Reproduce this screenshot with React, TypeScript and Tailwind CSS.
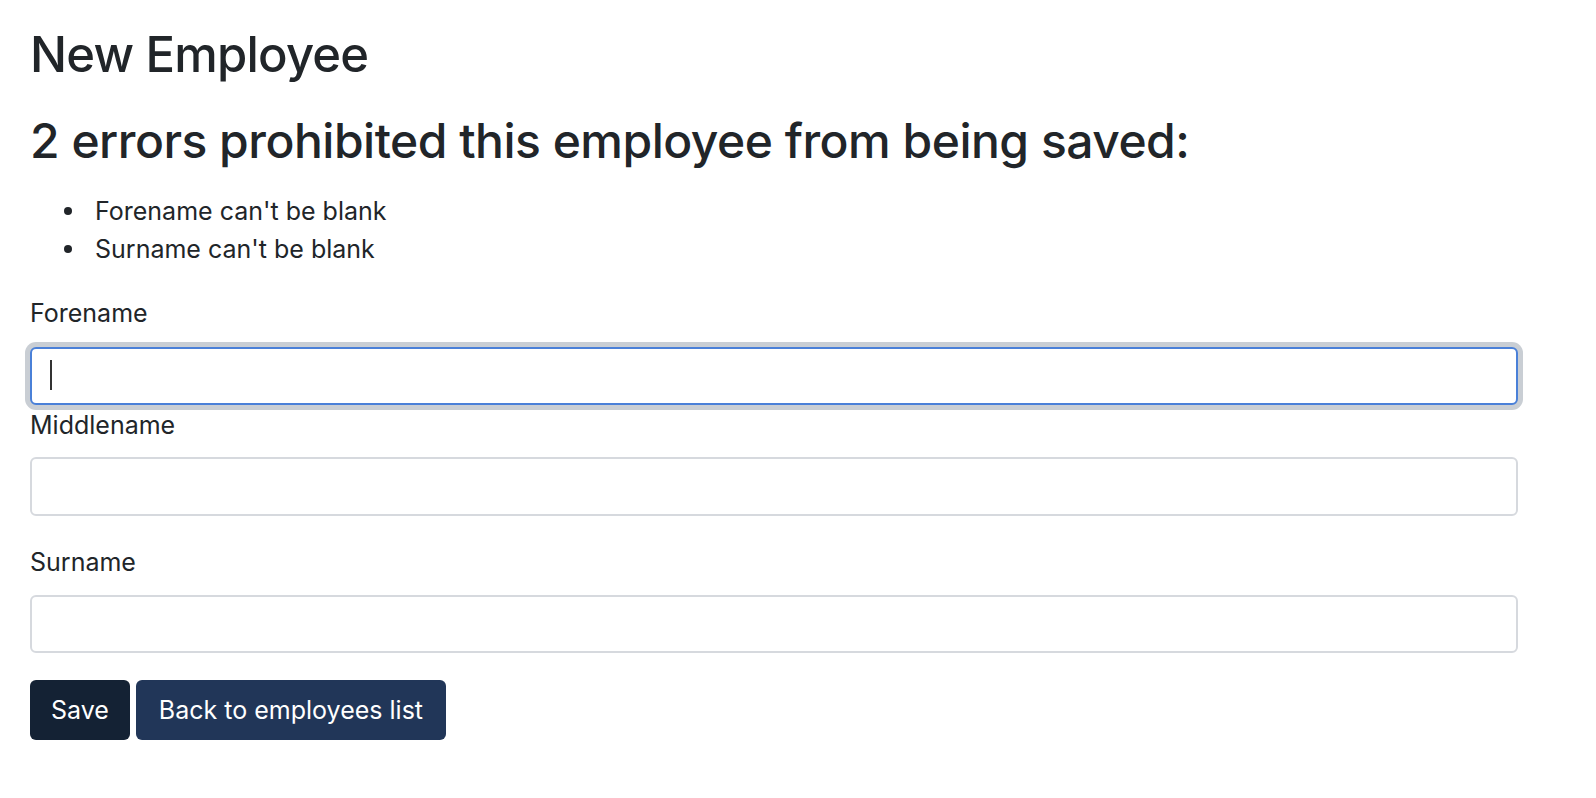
export default function App() {
  const errors = ["Forename can't be blank", "Surname can't be blank"];

  return (
    <div className="min-h-screen bg-white pl-[30px] pr-[78px] pt-[26px] text-[#212529] font-['Inter','Noto_Sans',sans-serif]">
      <h1 className="text-[49px] leading-[57.6px] font-medium tracking-[-0.8px]">New Employee</h1>

      {/* Error summary */}
      <h2 className="mt-[28px] text-[48px] leading-[57.6px] font-medium tracking-[-0.5px]">
        2 errors prohibited this employee from being saved:
      </h2>
      <ul className="mt-[23px] pl-[34px] text-[25px] leading-[38px]">
        {errors.map((e) => (
          <li key={e} className="flex items-center">
            <span className="mr-[23px] h-[8px] w-[8px] shrink-0 rounded-full bg-[#212529]" />
            {e}
          </li>
        ))}
      </ul>

      {/* Form */}
      <form className="mt-[26px] text-[25px] leading-[38px]">
        <label className="block mb-[15px]">Forename</label>
        <div className="relative">
          <input
            type="text"
            className="block w-full h-[58px] rounded-[6px] border-2 border-[#4a80d8] bg-white px-[18px] outline-none shadow-[0_0_0_5px_#c9ced4]"
          />
          <span className="absolute left-[20px] top-[13px] h-[30px] w-[2px] bg-[#333]" />
        </div>

        <label className="block mt-[1px] mb-[13px]">Middlename</label>
        <input
          type="text"
          className="block w-full h-[59px] rounded-[6px] border-2 border-[#d6d9de] bg-white px-[18px] outline-none"
        />

        <label className="block mt-[27px] mb-[14px]">Surname</label>
        <input
          type="text"
          className="block w-full h-[58px] rounded-[6px] border-2 border-[#d6d9de] bg-white px-[18px] outline-none"
        />

        <div className="mt-[27px] flex gap-[6px]">
          <button
            type="button"
            className="h-[60px] rounded-[6px] bg-[#142234] px-[21px] text-white"
          >
            Save
          </button>
          <button
            type="button"
            className="h-[60px] rounded-[6px] bg-[#213658] px-[23px] text-white"
          >
            Back to employees list
          </button>
        </div>
      </form>
    </div>
  );
}
